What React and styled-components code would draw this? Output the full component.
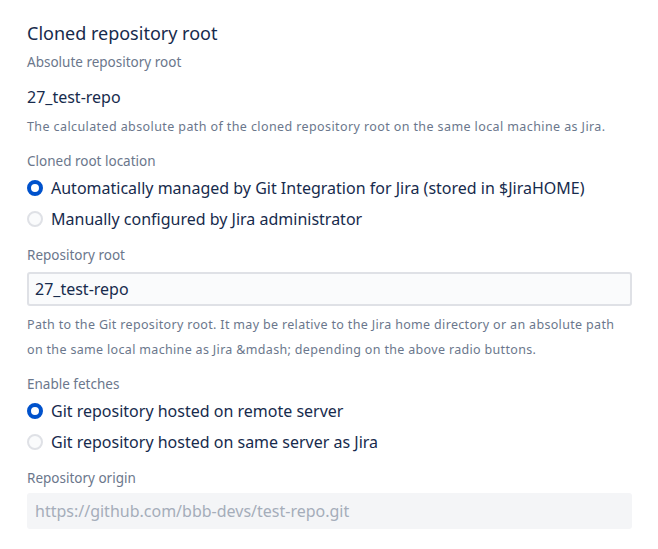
import styled, { createGlobalStyle } from "styled-components"

const GlobalStyle = createGlobalStyle`
    body {
        margin: 0;
        background: #ffffff;
        font-family: 'Noto Sans', 'Open Sans', sans-serif;
        color: #172b4d;
    }
`

const Page = styled.div`
    width: 658px;
    padding: 21px 26px 0 27px;
    box-sizing: border-box;
    display: flex;
    flex-direction: column;
`

const Title = styled.h2`
    margin: 0;
    font-size: 18px;
    line-height: 24px;
    font-weight: 400;
    color: #172b4d;
`

const Label = styled.div`
    margin-top: ${(p) => p.$top || 14}px;
    font-size: 13.5px;
    line-height: 20px;
    color: #6b778c;
`

const Value = styled.div`
    margin-top: 13px;
    font-size: 16px;
    line-height: 24px;
`

const Help = styled.div`
    margin-top: ${(p) => p.$top || 8}px;
    font-size: 12.5px;
    letter-spacing: ${(p) => p.$spacing || 0.2}px;
    line-height: 25px;
    color: #6b778c;
    white-space: nowrap;
`

const RadioGroup = styled.div`
    margin-top: 5px;
    display: flex;
    flex-direction: column;
    gap: 7px;
`

const RadioRow = styled.label`
    display: flex;
    align-items: center;
    gap: 8px;
    font-size: 16px;
    line-height: 24px;
    color: #172b4d;
`

const RadioCircle = styled.span`
    width: 16px;
    height: 16px;
    border-radius: 50%;
    box-sizing: border-box;
    flex-shrink: 0;
    background: ${(p) => (p.$checked ? "#ffffff" : "#fafbfc")};
    border: ${(p) => (p.$checked ? "4.5px solid #0052cc" : "2px solid #dfe1e6")};
`

const TextField = styled.div`
    margin-top: ${(p) => (p.$disabled ? 5 : 7)}px;
    height: ${(p) => (p.$disabled ? 36 : 34)}px;
    box-sizing: border-box;
    display: flex;
    align-items: center;
    padding: 0 6px;
    border-radius: 3px;
    border: 2px solid ${(p) => (p.$disabled ? "#f4f5f7" : "#dfe1e6")};
    background: ${(p) => (p.$disabled ? "#f4f5f7" : "#fafbfc")};
    color: ${(p) => (p.$disabled ? "#a5adba" : "#172b4d")};
    font-size: 16px;
`

function Radio({ checked, children }) {
    return (
        <RadioRow>
            <RadioCircle $checked={checked} />
            {children}
        </RadioRow>
    )
}

export default function App() {
    return (
        <Page>
            <GlobalStyle />
            <Title>Cloned repository root</Title>
            <Label $top={7}>Absolute repository root</Label>
            <Value>27_test-repo</Value>
            <Help $top={5} $spacing={0.4}>The calculated absolute path of the cloned repository root on the same local machine as Jira.</Help>

            <Label $top={12}>Cloned root location</Label>
            <RadioGroup>
                <Radio checked>Automatically managed by Git Integration for Jira (stored in $JiraHOME)</Radio>
                <Radio>Manually configured by Jira administrator</Radio>
            </RadioGroup>

            <Label>Repository root</Label>
            <TextField>27_test-repo</TextField>
            <Help $top={6} $spacing={0.33}>
                Path to the Git repository root. It may be relative to the Jira home directory or an absolute path
                <br />
                on the same local machine as Jira &amp;mdash; depending on the above radio buttons.
            </Help>

            <Label $top={12}>Enable fetches</Label>
            <RadioGroup>
                <Radio checked>Git repository hosted on remote server</Radio>
                <Radio>Git repository hosted on same server as Jira</Radio>
            </RadioGroup>

            <Label>Repository origin</Label>
            <TextField $disabled>https://github.com/bbb-devs/test-repo.git</TextField>
        </Page>
    )
}
